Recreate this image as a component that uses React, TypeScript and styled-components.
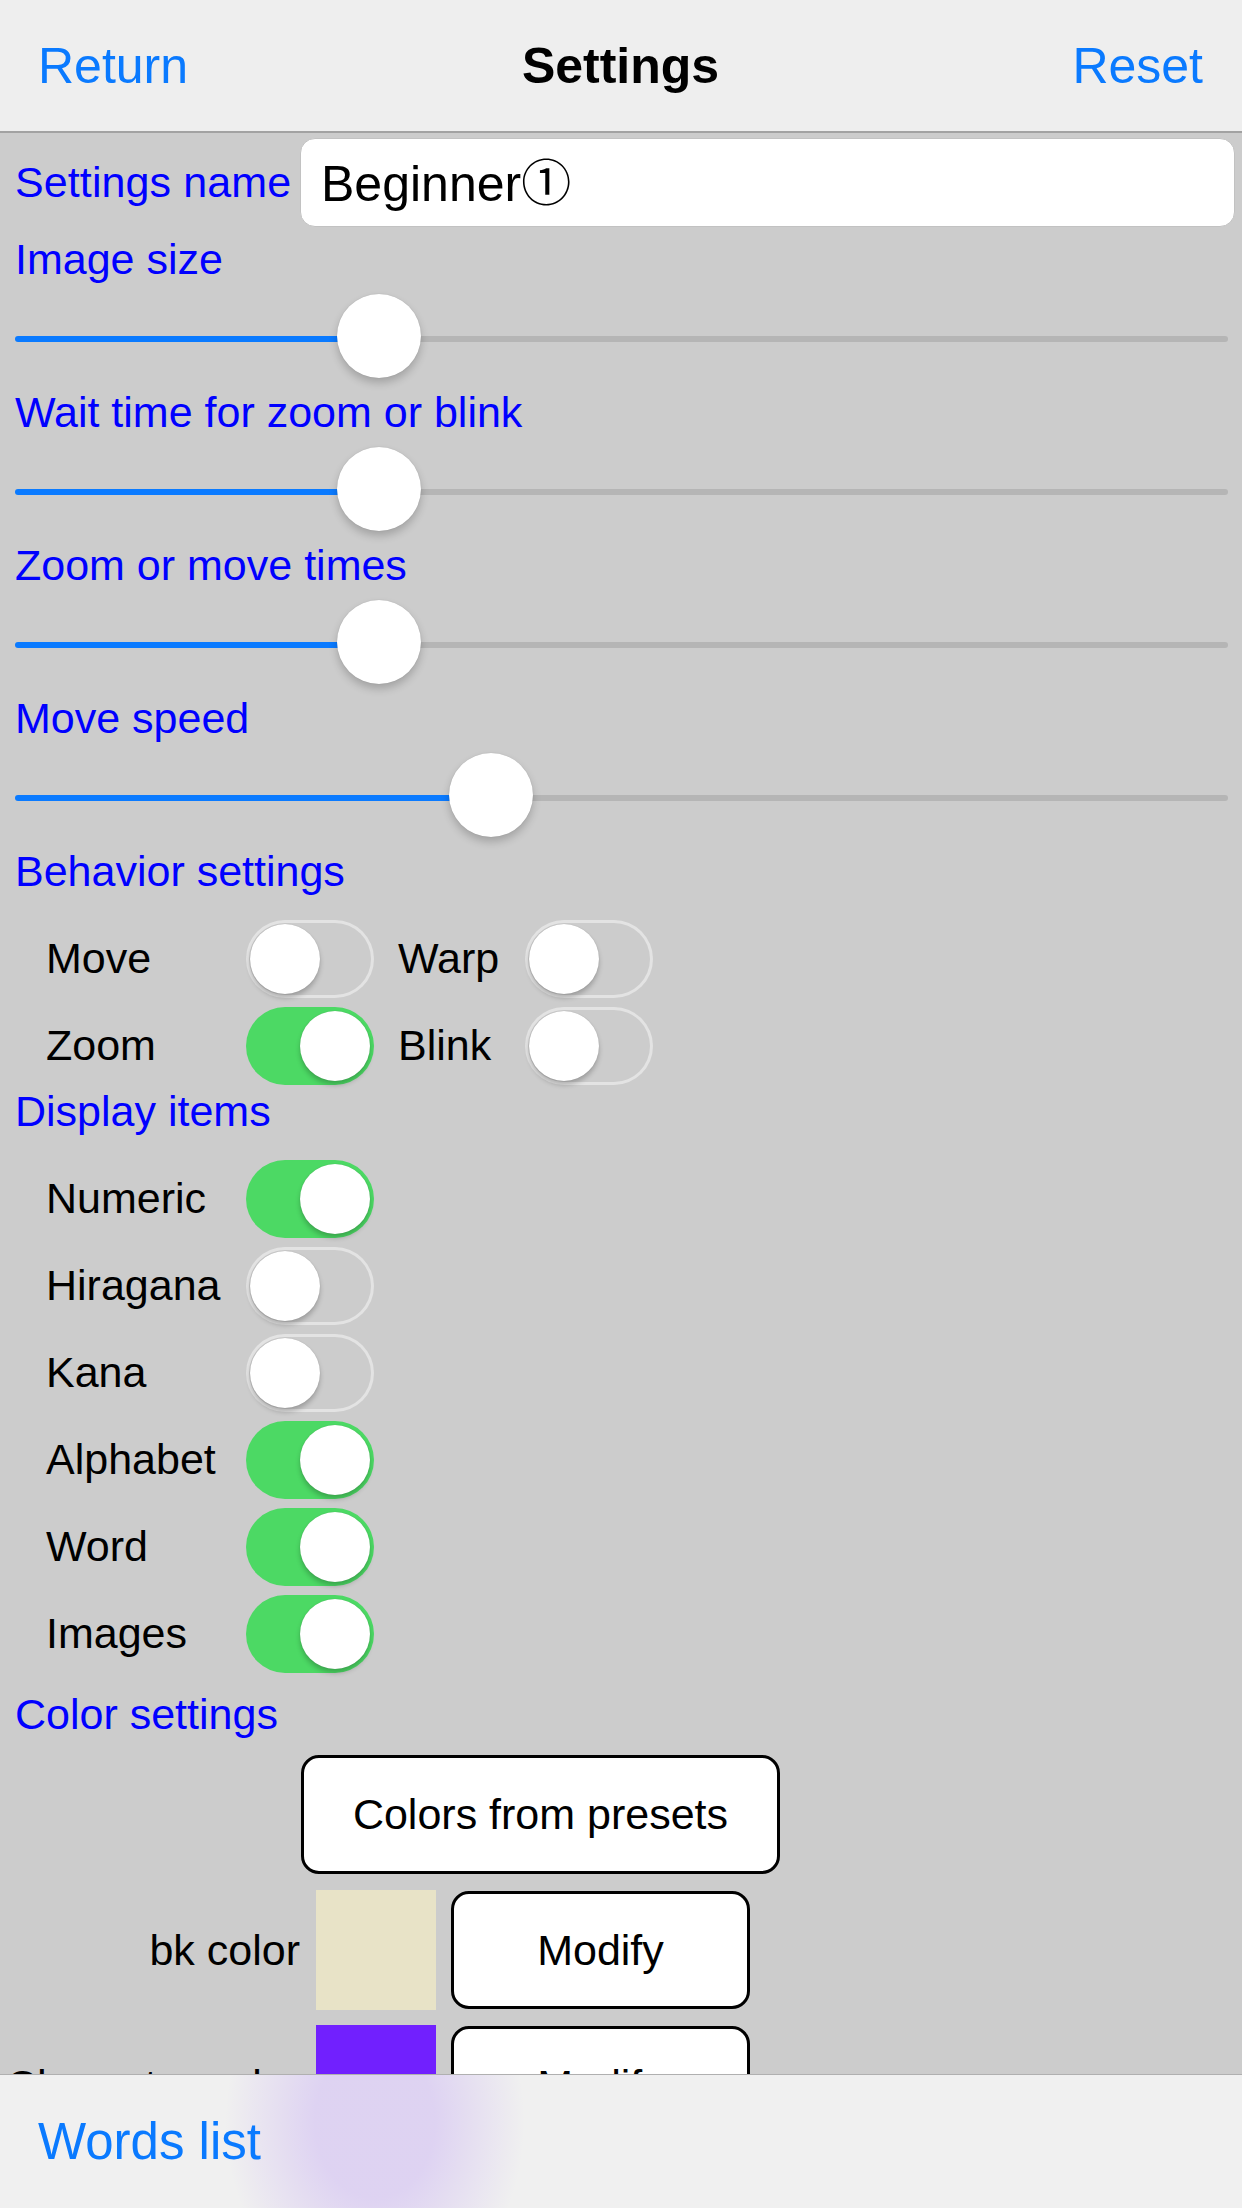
import styled, { createGlobalStyle } from 'styled-components';

const GlobalStyle = createGlobalStyle`
  html, body {
    margin: 0;
    padding: 0;
    background: #cccccc;
  }
  body {
    font-family: "Liberation Sans", Arial, "Noto Sans CJK JP", sans-serif;
  }
`;

const sliders = [
  { label: 'Image size', x: 379 },
  { label: 'Wait time for zoom or blink', x: 379 },
  { label: 'Zoom or move times', x: 379 },
  { label: 'Move speed', x: 491 },
];

const displayItems = [
  { label: 'Numeric', on: true },
  { label: 'Hiragana', on: false },
  { label: 'Kana', on: false },
  { label: 'Alphabet', on: true },
  { label: 'Word', on: true },
  { label: 'Images', on: true },
];

const colors = [
  { label: 'bk color', color: '#e8e3c7' },
  { label: 'Character color', color: '#7120fe' },
];

const Slider = ({ x }: { x: number }) => (
  <SliderRow>
    <Track>
      <Fill style={{ width: x - 15 }} />
      <Rest />
    </Track>
    <Thumb style={{ left: x - 42 }} />
  </SliderRow>
);

const Toggle = ({ on }: { on: boolean }) => (
  <SwitchTrack $on={on}>
    <Knob $on={on} />
  </SwitchTrack>
);

const App = () => {
  return (
    <>
      <GlobalStyle />
      <Screen>
        <NavBar>
          <NavButton>Return</NavButton>
          <NavTitle>Settings</NavTitle>
          <NavButton $right>Reset</NavButton>
        </NavBar>

        <Content>
          <NameRow>
            <NameLabel>Settings name</NameLabel>
            <NameInput readOnly value="Beginner①" />
          </NameRow>

          {sliders.map((s, i) => (
            <div key={s.label}>
              <SectionLabel $top={i === 0 ? 6 : 0}>{s.label}</SectionLabel>
              <Slider x={s.x} />
            </div>
          ))}

          <SectionLabel>Behavior settings</SectionLabel>
          <SwitchGroup $bottom={-4}>
            <SwitchRow>
              <RowLabel $w={200}>Move</RowLabel>
              <Toggle on={false} />
              <RowLabel $w={127} $gap={24}>Warp</RowLabel>
              <Toggle on={false} />
            </SwitchRow>
            <SwitchRow>
              <RowLabel $w={200}>Zoom</RowLabel>
              <Toggle on />
              <RowLabel $w={127} $gap={24}>Blink</RowLabel>
              <Toggle on={false} />
            </SwitchRow>
          </SwitchGroup>

          <SectionLabel>Display items</SectionLabel>
          <SwitchGroup $bottom={11}>
            {displayItems.map((d) => (
              <SwitchRow key={d.label}>
                <RowLabel $w={200}>{d.label}</RowLabel>
                <Toggle on={d.on} />
              </SwitchRow>
            ))}
          </SwitchGroup>

          <SectionLabel>Color settings</SectionLabel>
          <ColorRow $top={15}>
            <ColorLabel />
            <PresetButton>Colors from presets</PresetButton>
          </ColorRow>
          {colors.map((c, i) => (
            <ColorRow key={c.label} $top={i === 0 ? 16 : 15}>
              <ColorLabel>{c.label}</ColorLabel>
              <Swatch $color={c.color} />
              <ModifyButton>Modify</ModifyButton>
            </ColorRow>
          ))}
        </Content>

        <TabBar>
          <TabButton>Words list</TabButton>
        </TabBar>
      </Screen>
    </>
  );
};

const Screen = styled.div`
  width: 1242px;
  height: 2208px;
  display: flex;
  flex-direction: column;
  overflow: hidden;
  background: #cccccc;
`;

const NavBar = styled.header`
  flex: 0 0 131px;
  display: grid;
  grid-template-columns: 1fr auto 1fr;
  align-items: center;
  padding: 0 39px 0 38px;
  background: #eeeeee;
  border-bottom: 2px solid #a2a2a2;
`;

const NavButton = styled.span<{ $right?: boolean }>`
  font-size: 50px;
  color: #0a7aff;
  justify-self: ${(p) => (p.$right ? 'end' : 'start')};
`;

const NavTitle = styled.span`
  font-size: 50px;
  font-weight: bold;
  color: #000;
`;

const Content = styled.main`
  flex: 1;
  min-height: 0;
  overflow: hidden;
  display: flex;
  flex-direction: column;
`;

const NameRow = styled.div`
  display: flex;
  align-items: center;
  margin-top: 5px;
  padding: 0 7px 0 15px;
  height: 89px;
  flex-shrink: 0;
`;

const NameLabel = styled.span`
  width: 285px;
  flex-shrink: 0;
  font-size: 43px;
  color: #0000ff;
  white-space: nowrap;
  letter-spacing: 0.1px;
`;

const NameInput = styled.input`
  flex: 1;
  height: 89px;
  box-sizing: border-box;
  border: 1px solid #c2c2c2;
  border-radius: 15px;
  padding: 0 20px 7px;
  background: #fff;
  color: #000;
  font-family: inherit;
  font-size: 50px;
  outline: none;
`;

const SectionLabel = styled.div<{ $top?: number }>`
  height: 52px;
  line-height: 52px;
  margin-top: ${(p) => p.$top ?? 0}px;
  padding-left: 15px;
  font-size: 43px;
  color: #0000ff;
  white-space: nowrap;
  flex-shrink: 0;
`;

const SliderRow = styled.div`
  position: relative;
  height: 101px;
  padding: 51px 14px 0 15px;
  box-sizing: border-box;
`;

const Track = styled.div`
  display: flex;
  height: 6px;
  border-radius: 3px;
  overflow: hidden;
`;

const Fill = styled.div`
  background: #0a7aff;
`;

const Rest = styled.div`
  flex: 1;
  background: #b5b5b5;
`;

const Thumb = styled.div`
  position: absolute;
  top: 9px;
  width: 84px;
  height: 84px;
  border-radius: 50%;
  background: #fff;
  box-shadow: 0 5px 9px rgba(0, 0, 0, 0.2), 0 0 1px rgba(0, 0, 0, 0.2);
`;

const SwitchGroup = styled.div<{ $bottom: number }>`
  display: flex;
  flex-direction: column;
  margin: 18px 0 ${(p) => p.$bottom}px;
  flex-shrink: 0;
`;

const SwitchRow = styled.div`
  display: flex;
  align-items: center;
  height: 87px;
  padding-left: 46px;
`;

const RowLabel = styled.span<{ $w: number; $gap?: number }>`
  width: ${(p) => p.$w}px;
  margin-left: ${(p) => p.$gap ?? 0}px;
  flex-shrink: 0;
  font-size: 43px;
  color: #000;
`;

const SwitchTrack = styled.div<{ $on: boolean }>`
  position: relative;
  width: 128px;
  height: 78px;
  flex-shrink: 0;
  border-radius: 39px;
  background: ${(p) => (p.$on ? '#4cd964' : 'transparent')};
  box-shadow: ${(p) => (p.$on ? 'none' : 'inset 0 0 0 3px #e3e3e3')};
`;

const Knob = styled.div<{ $on: boolean }>`
  position: absolute;
  top: 4px;
  left: ${(p) => (p.$on ? 54 : 4)}px;
  width: 70px;
  height: 70px;
  border-radius: 50%;
  background: #fff;
  box-shadow: 0 4px 5px rgba(0, 0, 0, 0.22), 0 0 1px rgba(0, 0, 0, 0.2);
`;

const ColorRow = styled.div<{ $top: number }>`
  display: flex;
  align-items: center;
  margin-top: ${(p) => p.$top}px;
  flex-shrink: 0;
`;

const ColorLabel = styled.span`
  width: 300px;
  flex-shrink: 0;
  display: flex;
  justify-content: flex-end;
  white-space: nowrap;
  font-size: 43px;
  color: #000;
`;

const PresetButton = styled.button`
  margin-left: 1px;
  width: 479px;
  height: 119px;
  box-sizing: border-box;
  border: 3px solid #000;
  border-radius: 18px;
  background: #fff;
  color: #000;
  font-family: inherit;
  font-size: 43px;
  padding: 0;
`;

const Swatch = styled.div<{ $color: string }>`
  margin-left: 16px;
  width: 120px;
  height: 120px;
  flex-shrink: 0;
  background: ${(p) => p.$color};
`;

const ModifyButton = styled(PresetButton)`
  margin-left: 15px;
  width: 299px;
  height: 118px;
`;

const TabBar = styled.footer`
  flex: 0 0 133px;
  display: flex;
  align-items: center;
  padding-left: 38px;
  border-top: 1px solid #b0b0b0;
  background-color: #f0f0f0;
  background-image: radial-gradient(
    ellipse 150px 190px at 375px 35%,
    rgba(112, 32, 255, 0.14) 40%,
    rgba(112, 32, 255, 0) 100%
  );
`;

const TabButton = styled.span`
  font-size: 51px;
  color: #0a7aff;
`;

export default App;
